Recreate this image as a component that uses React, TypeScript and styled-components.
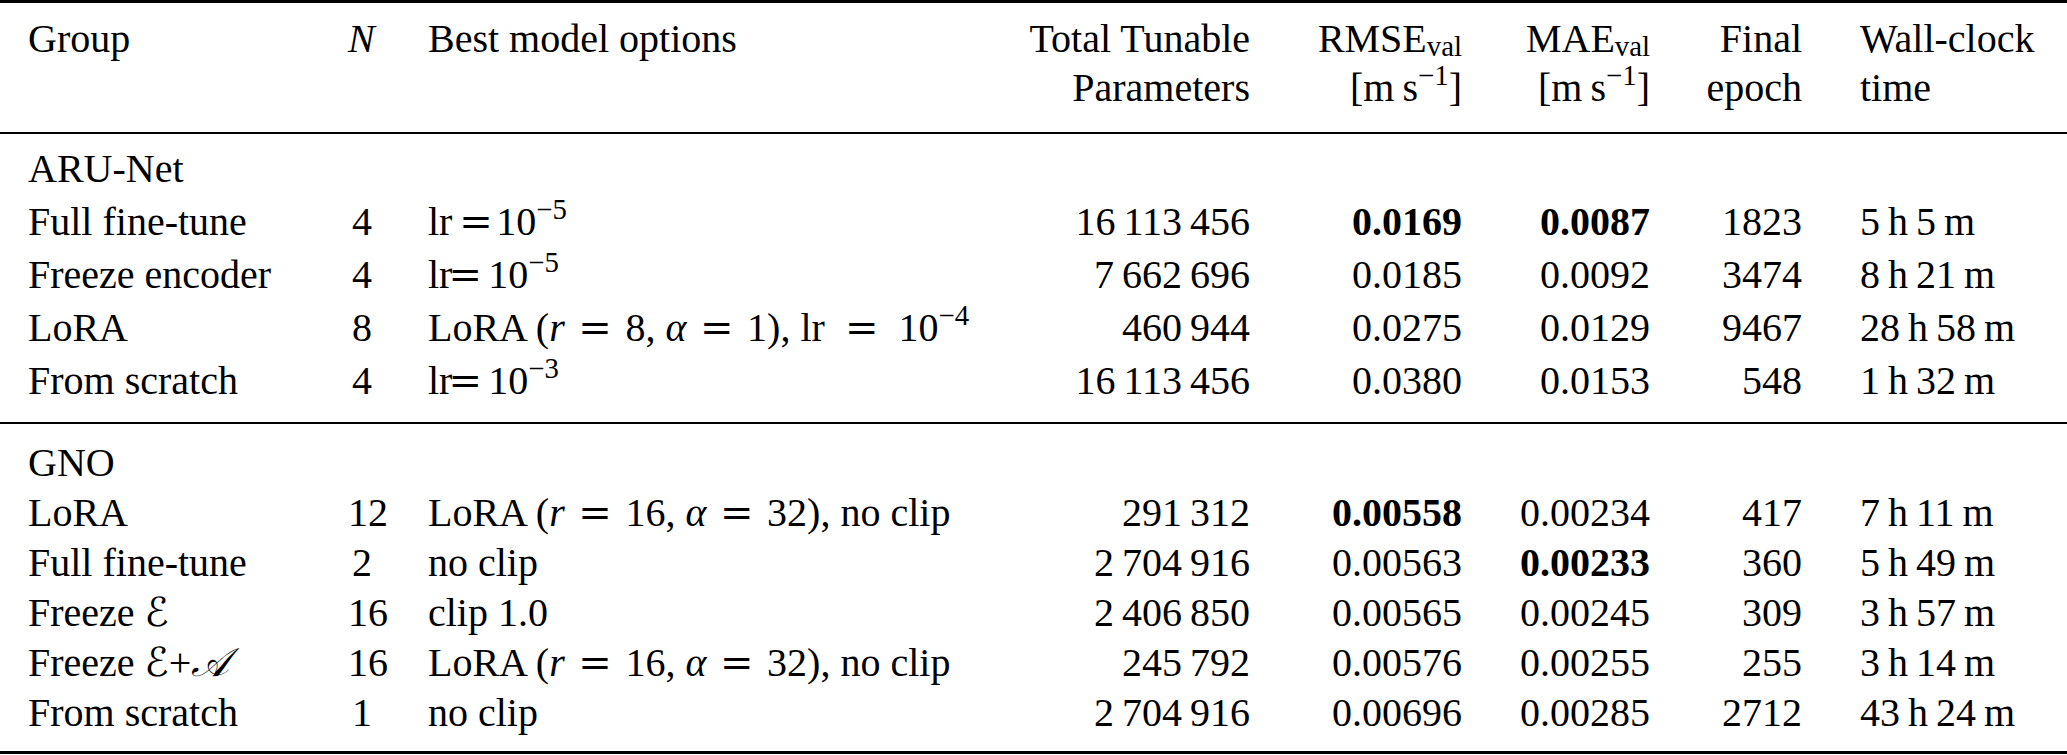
import React from 'react';
import styled, { createGlobalStyle } from 'styled-components';

const GlobalStyle = createGlobalStyle`
  html, body {
    margin: 0;
    padding: 0;
    background: #fff;
  }
`;

const Page = styled.div`
  width: 2067px;
  height: 755px;
  overflow: hidden;
  background: #fff;
`;

const Table = styled.table`
  width: 2067px;
  table-layout: fixed;
  border-collapse: separate;
  border-spacing: 0;
  font-family: "Liberation Serif", "Times New Roman", serif;
  font-size: 40px;
  color: #000;
`;

const Col = styled.col<{ $w: number }>`
  width: ${(p) => p.$w}px;
`;

const Cell = styled.td<{ $align?: 'left' | 'right'; $padL?: number; $padR?: number }>`
  padding: 0 ${(p) => p.$padR ?? 28}px 0 ${(p) => p.$padL ?? 28}px;
  text-align: ${(p) => p.$align ?? 'left'};
  white-space: nowrap;
  vertical-align: top;
  overflow: visible;
`;

const Head = styled.thead`
  line-height: 49px;

  tr:first-child td {
    border-top: 3px solid #000;
    padding-top: 11px;
  }

  tr:last-child td {
    border-bottom: 2px solid #000;
    padding-bottom: 20px;
  }
`;

const Body = styled.tbody<{ $lh: number; $padTop: number; $padBottom: number; $rule: number }>`
  line-height: ${(p) => p.$lh}px;

  tr:first-child td {
    padding-top: ${(p) => p.$padTop}px;
  }

  tr:last-child td {
    padding-bottom: ${(p) => p.$padBottom}px;
    border-bottom: ${(p) => p.$rule}px solid #000;
  }
`;

const Sup = styled.sup`
  font-size: 0.72em;
  line-height: 0;
  vertical-align: 0.56em;
`;

const Sub = styled.sub`
  font-size: 0.72em;
  line-height: 0;
  vertical-align: -0.14em;
`;

const Var = styled.i`
  font-style: italic;
`;

const Script = styled.span`
  font-family: "DejaVu Serif", "DejaVu Sans", serif;
  font-style: italic;
  line-height: 0;
`;

/* math relation: wider "=" like the TeX one, with thick spaces */
const Eq = styled.span<{ $l?: number; $r?: number }>`
  font-family: "DejaVu Serif", "DejaVu Sans", serif;
  line-height: 0;
  margin: 0 ${(p) => p.$r ?? 0.34}em 0 ${(p) => p.$l ?? 0.34}em;
`;

const B = styled.b`
  font-weight: bold;
`;

type Row = {
  name: React.ReactNode;
  n: string;
  opt: React.ReactNode;
  params: string;
  rmse: React.ReactNode;
  mae: React.ReactNode;
  epoch: string;
  time: string;
};

const T = '\u2009';
const num = (s: string) => s.replace(/ /g, T);

const unit = (
  <>
    [m{T}s<Sup>−1</Sup>]
  </>
);

const aruRows: Row[] = [
  {
    name: 'Full fine-tune',
    n: '4',
    opt: (
      <>
        lr<Eq $l={0.17} $r={0.09}>=</Eq>10<Sup>−5</Sup>
      </>
    ),
    params: '16 113 456',
    rmse: <B>0.0169</B>,
    mae: <B>0.0087</B>,
    epoch: '1823',
    time: '5 h 5 m',
  },
  {
    name: 'Freeze encoder',
    n: '4',
    opt: (
      <>
        lr<Eq $l={-0.1} $r={0.16}>=</Eq>10<Sup>−5</Sup>
      </>
    ),
    params: '7 662 696',
    rmse: '0.0185',
    mae: '0.0092',
    epoch: '3474',
    time: '8 h 21 m',
  },
  {
    name: 'LoRA',
    n: '8',
    opt: (
      <>
        LoRA (<Var>r</Var>
        <Eq>=</Eq>8, <Var>α</Var>
        <Eq>=</Eq>1), lr<Eq $l={0.5} $r={0.5}>=</Eq>10<Sup>−4</Sup>
      </>
    ),
    params: '460 944',
    rmse: '0.0275',
    mae: '0.0129',
    epoch: '9467',
    time: '28 h 58 m',
  },
  {
    name: 'From scratch',
    n: '4',
    opt: (
      <>
        lr<Eq $l={-0.1} $r={0.16}>=</Eq>10<Sup>−3</Sup>
      </>
    ),
    params: '16 113 456',
    rmse: '0.0380',
    mae: '0.0153',
    epoch: '548',
    time: '1 h 32 m',
  },
];

const loraOpt = (
  <>
    LoRA (<Var>r</Var>
    <Eq>=</Eq>16, <Var>α</Var>
    <Eq>=</Eq>32), no clip
  </>
);

const gnoRows: Row[] = [
  {
    name: 'LoRA',
    n: '12',
    opt: loraOpt,
    params: '291 312',
    rmse: <B>0.00558</B>,
    mae: '0.00234',
    epoch: '417',
    time: '7 h 11 m',
  },
  {
    name: 'Full fine-tune',
    n: '2',
    opt: 'no clip',
    params: '2 704 916',
    rmse: '0.00563',
    mae: <B>0.00233</B>,
    epoch: '360',
    time: '5 h 49 m',
  },
  {
    name: (
      <>
        Freeze <Script>ℰ</Script>
      </>
    ),
    n: '16',
    opt: 'clip 1.0',
    params: '2 406 850',
    rmse: '0.00565',
    mae: '0.00245',
    epoch: '309',
    time: '3 h 57 m',
  },
  {
    name: (
      <>
        Freeze <Script>ℰ</Script>+<Script>𝒜</Script>
      </>
    ),
    n: '16',
    opt: loraOpt,
    params: '245 792',
    rmse: '0.00576',
    mae: '0.00255',
    epoch: '255',
    time: '3 h 14 m',
  },
  {
    name: 'From scratch',
    n: '1',
    opt: 'no clip',
    params: '2 704 916',
    rmse: '0.00696',
    mae: '0.00285',
    epoch: '2712',
    time: '43 h 24 m',
  },
];

const DataRow: React.FC<{ row: Row }> = ({ row }) => (
  <tr>
    <Cell>{row.name}</Cell>
    <Cell $align="right">{row.n}</Cell>
    <Cell>{row.opt}</Cell>
    <Cell $align="right">{num(row.params)}</Cell>
    <Cell $align="right">{row.rmse}</Cell>
    <Cell $align="right">{row.mae}</Cell>
    <Cell $align="right">{row.epoch}</Cell>
    <Cell $padL={30}>{num(row.time)}</Cell>
  </tr>
);

const GroupRow: React.FC<{ label: string }> = ({ label }) => (
  <tr>
    <Cell colSpan={8}>{label}</Cell>
  </tr>
);

export default function App() {
  return (
    <Page>
      <GlobalStyle />
      <Table>
        <colgroup>
          <Col $w={320} />
          <Col $w={80} />
          <Col $w={600} />
          <Col $w={278} />
          <Col $w={212} />
          <Col $w={188} />
          <Col $w={152} />
          <Col $w={237} />
        </colgroup>
        <Head>
          <tr>
            <Cell>Group</Cell>
            <Cell $align="right" $padR={37}>
              <Var>N</Var>
            </Cell>
            <Cell>Best model options</Cell>
            <Cell $align="right">Total Tunable</Cell>
            <Cell $align="right">
              RMSE<Sub>val</Sub>
            </Cell>
            <Cell $align="right">
              MAE<Sub>val</Sub>
            </Cell>
            <Cell $align="right">Final</Cell>
            <Cell $padL={30}>Wall-clock</Cell>
          </tr>
          <tr>
            <Cell />
            <Cell />
            <Cell />
            <Cell $align="right">Parameters</Cell>
            <Cell $align="right">{unit}</Cell>
            <Cell $align="right">{unit}</Cell>
            <Cell $align="right">epoch</Cell>
            <Cell $padL={30}>time</Cell>
          </tr>
        </Head>
        <Body $lh={53} $padTop={8} $padBottom={15} $rule={2}>
          <GroupRow label="ARU-Net" />
          {aruRows.map((r, i) => (
            <DataRow key={i} row={r} />
          ))}
        </Body>
        <Body $lh={50} $padTop={14} $padBottom={13} $rule={3}>
          <GroupRow label="GNO" />
          {gnoRows.map((r, i) => (
            <DataRow key={i} row={r} />
          ))}
        </Body>
      </Table>
    </Page>
  );
}
